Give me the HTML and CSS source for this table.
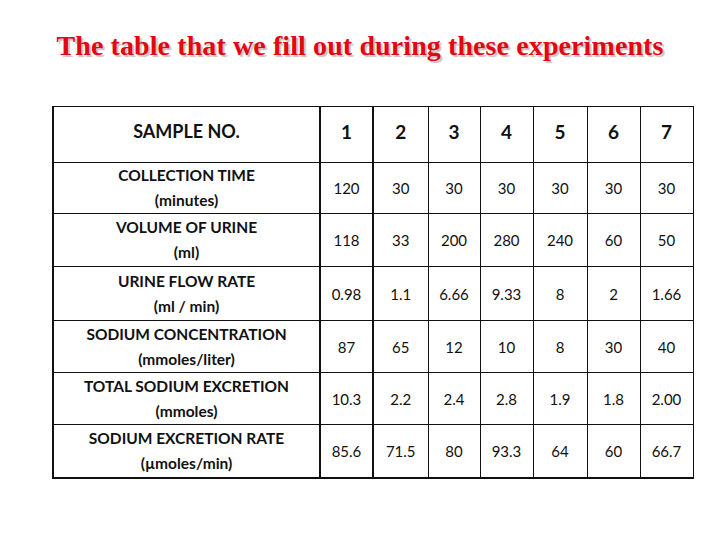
FILE: index.html
```html
<!DOCTYPE html>
<html>
<head>
<meta charset="utf-8">
<link rel="stylesheet" href="styles.css">
</head>
<body>
<h1 class="title">The table that we fill out during these experiments</h1>
<table class="grid">
  <colgroup>
    <col class="c-label"><col class="c1"><col class="c2"><col class="c3"><col class="c4"><col class="c5"><col class="c6"><col class="c7">
  </colgroup>
  <tr class="r-head">
    <th class="label head-label">SAMPLE NO.</th>
    <th class="num n1">1</th><th class="num n2">2</th><th class="num">3</th><th class="num">4</th><th class="num">5</th><th class="num">6</th><th class="num">7</th>
  </tr>
  <tr class="r1">
    <th class="label">COLLECTION TIME<br>(minutes)</th>
    <td class="n1">120</td><td class="n2">30</td><td>30</td><td>30</td><td>30</td><td>30</td><td>30</td>
  </tr>
  <tr class="r2">
    <th class="label">VOLUME OF URINE<br>(ml)</th>
    <td class="n1">118</td><td class="n2">33</td><td>200</td><td>280</td><td>240</td><td>60</td><td>50</td>
  </tr>
  <tr class="r3">
    <th class="label">URINE FLOW RATE<br>(ml / min)</th>
    <td class="n1">0.98</td><td class="n2">1.1</td><td>6.66</td><td>9.33</td><td>8</td><td>2</td><td>1.66</td>
  </tr>
  <tr class="r4">
    <th class="label">SODIUM CONCENTRATION<br>(mmoles/liter)</th>
    <td class="n1">87</td><td class="n2">65</td><td>12</td><td>10</td><td>8</td><td>30</td><td>40</td>
  </tr>
  <tr class="r5">
    <th class="label">TOTAL SODIUM EXCRETION<br>(mmoles)</th>
    <td class="n1">10.3</td><td class="n2">2.2</td><td>2.4</td><td>2.8</td><td>1.9</td><td>1.8</td><td>2.00</td>
  </tr>
  <tr class="r6">
    <th class="label">SODIUM EXCRETION RATE<br>(µmoles/min)</th>
    <td class="n1">85.6</td><td class="n2">71.5</td><td>80</td><td>93.3</td><td>64</td><td>60</td><td>66.7</td>
  </tr>
</table>
</body>
</html>
```
FILE: styles.css
```css
html, body {
  margin: 0;
  padding: 0;
  background: #ffffff;
}
body {
  width: 720px;
  height: 540px;
  overflow: hidden;
}
.title {
  margin: 0;
  padding-top: 31px;
  height: 30px;
  line-height: 30px;
  text-align: center;
  font-family: "Liberation Serif", serif;
  font-weight: bold;
  font-size: 28px;
  letter-spacing: 0.1px;
  color: #e30613;
  text-shadow: 2px 2px 1px #c4c4c4;
}
.grid {
  margin: 45px 0 0 52px;
  border-collapse: collapse;
  table-layout: fixed;
  width: 640px;
  font-family: Lato, "Open Sans", sans-serif;
  color: #111;
}
.c-label { width: 267px; }
.c1 { width: 53px; }
.c2 { width: 55px; }
.c3 { width: 52px; }
.c4 { width: 53px; }
.c5 { width: 54px; }
.c6 { width: 53px; }
.c7 { width: 53px; }
.grid th, .grid td {
  border: 1px solid #111;
  padding: 0;
  text-align: center;
  vertical-align: middle;
}
.grid td {
  font-size: 15px;
  font-weight: normal;
}
.label {
  font-size: 15.5px;
  font-weight: bold;
  line-height: 25px;
  border-left: 2px solid #111 !important;
  border-right: 2px solid #111 !important;
}
.head-label {
  font-size: 18px;
}
.r-head th {
  padding-bottom: 6px !important;
}
.num {
  font-size: 19px;
  font-weight: bold;
}
.n1 {
  border-right: 2px solid #111 !important;
}
.r-head { height: 56px; }
.r1 { height: 51px; }
.r2 { height: 53px; }
.r3 { height: 54px; }
.r4 { height: 52px; }
.r5 { height: 52px; }
.r6 { height: 53px; }
.grid tr:last-child th, .grid tr:last-child td {
  border-bottom: 2px solid #111;
}
```
